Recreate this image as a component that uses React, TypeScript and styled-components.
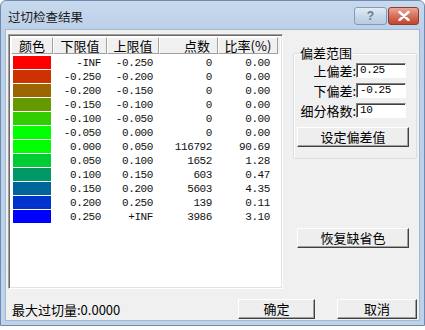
import styled, { createGlobalStyle } from "styled-components";

const GlobalStyle = createGlobalStyle`
  html, body {
    margin: 0;
    padding: 0;
    background: #ffffff;
  }
  body {
    font-family: "Noto Sans CJK SC", "Liberation Sans", sans-serif;
  }
`;

const CJK = `"Noto Sans CJK SC", "Liberation Sans", sans-serif`;
const MONO = `"Liberation Mono", "DejaVu Sans Mono", monospace`;

const rows = [
  { color: "#ff0000", low: "-INF", high: "-0.250", count: "0", rate: "0.00" },
  { color: "#cc3300", low: "-0.250", high: "-0.200", count: "0", rate: "0.00" },
  { color: "#996600", low: "-0.200", high: "-0.150", count: "0", rate: "0.00" },
  { color: "#669900", low: "-0.150", high: "-0.100", count: "0", rate: "0.00" },
  { color: "#33cc00", low: "-0.100", high: "-0.050", count: "0", rate: "0.00" },
  { color: "#00ff00", low: "-0.050", high: "0.000", count: "0", rate: "0.00" },
  { color: "#00ff00", low: "0.000", high: "0.050", count: "116792", rate: "90.69" },
  { color: "#00cc33", low: "0.050", high: "0.100", count: "1652", rate: "1.28" },
  { color: "#009966", low: "0.100", high: "0.150", count: "603", rate: "0.47" },
  { color: "#006699", low: "0.150", high: "0.200", count: "5603", rate: "4.35" },
  { color: "#0033cc", low: "0.200", high: "0.250", count: "139", rate: "0.11" },
  { color: "#0000ff", low: "0.250", high: "+INF", count: "3986", rate: "3.10" },
];

const COLS = "42px 54px 52px 59px 60px";

export default function App() {
  return (
    <>
      <GlobalStyle />
      <Window>
        <TitleBar>
          <Title>过切检查结果</Title>
          <CaptionButtons>
            <HelpButton>?</HelpButton>
            <CloseButton>
              <svg width="12" height="10" viewBox="0 0 12 10">
                <path
                  d="M1.5 1 L10.5 9 M10.5 1 L1.5 9"
                  stroke="#ffffff"
                  strokeWidth="2.4"
                  strokeLinecap="round"
                />
              </svg>
            </CloseButton>
          </CaptionButtons>
        </TitleBar>
        <Client>
          <TopRow>
            <ListBox>
              <HeaderRow>
                <HeaderCell $align="center">颜色</HeaderCell>
                <HeaderCell $align="center">下限值</HeaderCell>
                <HeaderCell $align="center">上限值</HeaderCell>
                <HeaderCell $align="right">点数</HeaderCell>
                <HeaderCell $align="center">比率(%)</HeaderCell>
              </HeaderRow>
              <Rows>
                {rows.map((r, i) => (
                  <Row key={i}>
                    <SwatchCell>
                      <Swatch $color={r.color} />
                    </SwatchCell>
                    <NumCell>{r.low}</NumCell>
                    <NumCell>{r.high}</NumCell>
                    <NumCell>{r.count}</NumCell>
                    <NumCell $pad={8}>{r.rate}</NumCell>
                  </Row>
                ))}
              </Rows>
            </ListBox>
            <Side>
              <GroupBox>
                <Legend>偏差范围</Legend>
                <Field>
                  <FieldLabel>上偏差:</FieldLabel>
                  <Input>0.25</Input>
                </Field>
                <Field>
                  <FieldLabel>下偏差:</FieldLabel>
                  <Input>-0.25</Input>
                </Field>
                <Field>
                  <FieldLabel>细分格数:</FieldLabel>
                  <Input>10</Input>
                </Field>
                <Button $width={112}>设定偏差值</Button>
              </GroupBox>
              <ResetWrap>
                <Button $width={112}>恢复缺省色</Button>
              </ResetWrap>
            </Side>
          </TopRow>
          <BottomRow>
            <Status>最大过切量:0.0000</Status>
            <Buttons>
              <Button $width={77}>确定</Button>
              <Button $width={80}>取消</Button>
            </Buttons>
          </BottomRow>
        </Client>
      </Window>
    </>
  );
}

const Window = styled.div`
  width: 425px;
  height: 326px;
  box-sizing: border-box;
  border: 1px solid #6f8cb0;
  border-radius: 6px 6px 0 0;
  background: linear-gradient(#c8d9ed, #bcd0e8 30px, #bed2ea);
  display: flex;
  flex-direction: column;
`;

const TitleBar = styled.div`
  height: 28px;
  display: flex;
  align-items: flex-start;
  justify-content: space-between;
  padding: 0 5px 0 7px;
`;

const Title = styled.div`
  font-family: ${CJK};
  font-size: 12.5px;
  color: #1a1a1a;
  line-height: 14px;
  margin-top: 9px;
`;

const CaptionButtons = styled.div`
  display: flex;
  gap: 1px;
  margin-top: 6px;
`;

const CaptionBase = styled.div`
  height: 18px;
  box-sizing: border-box;
  border-radius: 3px;
  display: flex;
  align-items: center;
  justify-content: center;
`;

const HelpButton = styled(CaptionBase)`
  width: 33px;
  border: 1px solid #8399b6;
  background: linear-gradient(#e3ecf6, #c9d8ea 50%, #b7cbe2);
  color: #6a7b92;
  font-family: "Liberation Sans", sans-serif;
  font-weight: bold;
  font-size: 12px;
`;

const CloseButton = styled(CaptionBase)`
  width: 31px;
  border: 1px solid #8e3c2c;
  background: linear-gradient(#e9a898, #d6705a 50%, #c2452f);
`;

const Client = styled.div`
  flex: 1;
  margin: 0 4px 4px 4px;
  background: #f0f0f0;
  border: 1px solid #a3b8d2;
  padding: 4px 2px 0 2px;
  display: flex;
  flex-direction: column;
`;

const TopRow = styled.div`
  display: flex;
  height: 255px;
`;

const ListBox = styled.div`
  width: 275px;
  box-sizing: border-box;
  border: 1px solid;
  border-color: #a0a0a0 #ffffff #ffffff #a0a0a0;
  box-shadow: inset 1px 1px #696969, inset -1px -1px #e3e3e3;
  background: #ffffff;
  padding: 2px 2px;
`;

const HeaderRow = styled.div`
  display: grid;
  grid-template-columns: ${COLS};
  height: 17px;
  background: #f0f0f0;
`;

const HeaderCell = styled.div<{ $align: "center" | "right" }>`
  font-family: ${CJK};
  font-size: 13px;
  line-height: 15px;
  color: #000;
  text-align: ${(p) => p.$align};
  padding-right: ${(p) => (p.$align === "right" ? "7px" : "0")};
  border-top: 1px solid #ffffff;
  border-left: 1px solid #ffffff;
  border-right: 1px solid #a0a0a0;
  border-bottom: 1px solid #a0a0a0;
  box-sizing: border-box;
`;

const Rows = styled.div`
  padding-top: 2px;
`;

const Row = styled.div`
  display: grid;
  grid-template-columns: ${COLS};
  height: 14px;
  align-items: center;
`;

const SwatchCell = styled.div`
  padding-left: 2px;
  height: 14px;
`;

const Swatch = styled.div<{ $color: string }>`
  width: 38px;
  height: 13px;
  background: ${(p) => p.$color};
`;

const NumCell = styled.div<{ $pad?: number }>`
  font-family: ${MONO};
  font-size: 11px;
  letter-spacing: -0.4px;
  line-height: 14px;
  color: #111;
  text-align: right;
  padding-right: ${(p) => p.$pad ?? 6}px;
  white-space: pre;
`;

const Side = styled.div`
  margin-left: 10px;
  width: 124px;
  display: flex;
  flex-direction: column;
`;

const GroupBox = styled.fieldset`
  margin: 12px 0 0 0;
  padding: 1px 0 11px 0;
  border: 1px solid #d5dfe5;
  box-shadow: inset 1px 1px #ffffff;
  border-radius: 2px;
  display: flex;
  flex-direction: column;
  align-items: flex-start;
`;

const Legend = styled.legend`
  font-family: ${CJK};
  font-size: 13px;
  line-height: 14px;
  color: #000;
  padding: 0 1px;
  margin-left: 5px;
`;

const Field = styled.div`
  display: flex;
  align-items: center;
  height: 15px;
  margin-top: 5px;
  &:first-of-type {
    margin-top: 2px;
  }
`;

const FieldLabel = styled.div`
  width: 62px;
  text-align: right;
  font-family: ${CJK};
  font-size: 13px;
  line-height: 15px;
  color: #000;
  white-space: nowrap;
`;

const Input = styled.div`
  width: 50px;
  height: 15px;
  box-sizing: border-box;
  border: 1px solid;
  border-color: #808080 #ffffff #ffffff #808080;
  box-shadow: inset 1px 1px #404040;
  background: #ffffff;
  font-family: ${MONO};
  font-size: 11px;
  letter-spacing: -0.4px;
  line-height: 13px;
  padding-left: 3px;
  color: #000;
`;

const Button = styled.div<{ $width: number }>`
  width: ${(p) => p.$width}px;
  height: 20px;
  box-sizing: border-box;
  border: 1px solid;
  border-color: #ffffff #404040 #404040 #ffffff;
  box-shadow: inset -1px -1px #a0a0a0;
  background: #eeeeee;
  font-family: ${CJK};
  font-size: 13px;
  line-height: 17px;
  text-align: center;
  color: #000;
  ${GroupBox} & {
    margin: 9px 0 0 3px;
  }
`;

const ResetWrap = styled.div`
  margin-top: 69px;
  padding-left: 4px;
`;

const BottomRow = styled.div`
  display: flex;
  align-items: center;
  justify-content: space-between;
  margin-top: 10px;
  height: 20px;
`;

const Status = styled.div`
  font-family: ${CJK};
  font-size: 13px;
  color: #000;
  padding-left: 4px;
`;

const Buttons = styled.div`
  display: flex;
  gap: 22px;
`;
